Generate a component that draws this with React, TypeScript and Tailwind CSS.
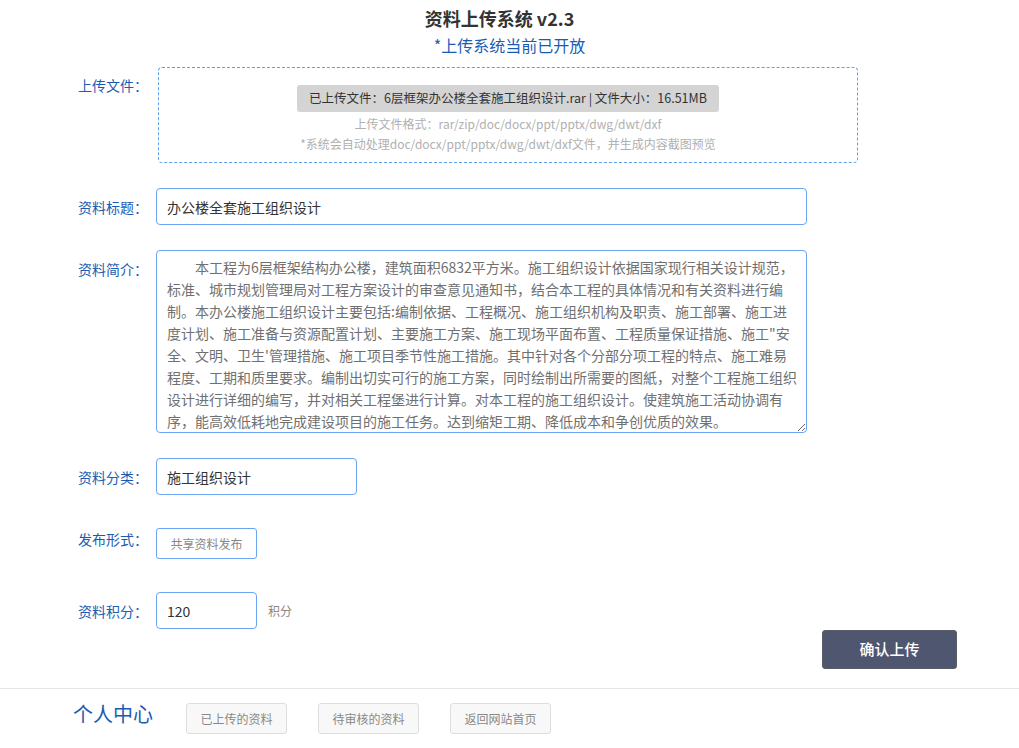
import React from "react";

const font = { fontFamily: '"Noto Sans CJK SC", "Noto Sans", sans-serif' };

const intro = [
  "　　本工程为6层框架结构办公楼，建筑面积6832平方米。施工组织设计依据国家现行相关设计规范，",
  "标准、城市规划管理局对工程方案设计的审查意见通知书，结合本工程的具体情况和有关资料进行编",
  "制。本办公楼施工组织设计主要包括:编制依据、工程概况、施工组织机构及职责、施工部署、施工进",
  "度计划、施工准备与资源配置计划、主要施工方案、施工现场平面布置、工程质量保证措施、施工\"安",
  "全、文明、卫生'管理措施、施工项目季节性施工措施。其中针对各个分部分项工程的特点、施工难易",
  "程度、工期和质里要求。编制出切实可行的施工方案，同时绘制出所需要的图紙，对整个工程施工组织",
  "设计进行详细的编写，并对相关工程堡进行计算。对本工程的施工组织设计。使建筑施工活动协调有",
  "序，能高效低耗地完成建设项目的施工任务。达到缩矩工期、降低成本和争创优质的效果。",
].join("\n");

function Label({ children, className = "" }: { children: React.ReactNode; className?: string }) {
  return (
    <div className={"w-[78px] shrink-0 text-[14px] leading-[20px] text-[#1b5cb3] " + className}>
      {children}
    </div>
  );
}

export default function App() {
  return (
    <div className="w-[1019px] min-h-[748px] bg-white" style={font}>
      <div className="pt-[6px] pr-[20px] text-center text-[18px] font-bold leading-[24px] text-[#333]">
        资料上传系统 v2.3
      </div>
      <div className="mt-[4px] text-center text-[16px] leading-[22px] text-[#1b5cb3]">
        *上传系统当前已开放
      </div>

      <div className="w-[957px] pl-[78px] flex flex-col">
        {/* upload file */}
        <div className="mt-[11px] flex items-start">
          <Label className="pt-[8px]">上传文件：</Label>
          <div className="ml-[2px] w-[700px] h-[96px] rounded-[4px] border border-dashed border-[#5b9ff0] flex flex-col items-center pt-[17px]">
            <div className="h-[27px] px-[12px] rounded-[3px] bg-[#d4d4d4] flex items-center text-[12.5px] text-[#333]">
              已上传文件：6层框架办公楼全套施工组织设计.rar | 文件大小：16.51MB
            </div>
            <div className="mt-[2px] text-[12px] leading-[20px] text-[#b0b0b0]">
              上传文件格式：rar/zip/doc/docx/ppt/pptx/dwg/dwt/dxf
            </div>
            <div className="text-[12px] leading-[20px] text-[#b0b0b0]">
              *系统会自动处理doc/docx/ppt/pptx/dwg/dwt/dxf文件，并生成内容截图预览
            </div>
          </div>
        </div>

        {/* title */}
        <div className="mt-[25px] flex items-center">
          <Label>资料标题：</Label>
          <input
            readOnly
            value="办公楼全套施工组织设计"
            className="w-[651px] h-[37px] rounded-[4px] border border-[#6aa4f2] px-[10px] text-[14px] text-[#333] outline-none"
            style={font}
          />
        </div>

        {/* intro */}
        <div className="mt-[25px] flex items-start">
          <Label className="pt-[9px]">资料简介：</Label>
          <textarea
            readOnly
            value={intro}
            className="w-[651px] h-[183px] rounded-[4px] border border-[#6aa4f2] pl-[10px] pr-[6px] pt-[5px] pb-0 text-[14px] leading-[22px] text-[#707070] outline-none overflow-hidden whitespace-pre"
            style={font}
          />
        </div>

        {/* category */}
        <div className="mt-[25px] flex items-center">
          <Label>资料分类：</Label>
          <input
            readOnly
            value="施工组织设计"
            className="w-[201px] h-[37px] rounded-[4px] border border-[#6aa4f2] px-[10px] text-[14px] text-[#333] outline-none"
            style={font}
          />
        </div>

        {/* publish type */}
        <div className="mt-[33px] flex items-start">
          <Label className="pt-[1px]">发布形式：</Label>
          <div className="w-[101px] h-[31px] rounded-[3px] border border-[#6aa4f2] flex items-center justify-center text-[12px] text-[#888]">
            共享资料发布
          </div>
        </div>

        {/* points */}
        <div className="mt-[33px] flex items-center">
          <Label>资料积分：</Label>
          <input
            readOnly
            value="120"
            className="w-[101px] h-[37px] rounded-[4px] border border-[#6aa4f2] px-[10px] text-[14px] text-[#333] outline-none"
            style={font}
          />
          <span className="ml-[11px] text-[12px] text-[#888]">积分</span>
        </div>

        <div className="mt-[1px] flex justify-end">
          <div className="w-[135px] h-[39px] rounded-[3px] bg-[#4f5670] border border-[#5a5d68] flex items-center justify-center text-[15px] font-medium text-white">
            确认上传
          </div>
        </div>
      </div>

      <div className="mt-[19px] border-t border-[#e3e5e8]" />

      <div className="flex items-start pl-[73px]">
        <div className="mt-[11px] text-[20px] leading-[28px] text-[#1b5cb3] font-normal">个人中心</div>
        <div className="ml-[33px] mt-[14px] flex gap-[31px]">
          {["已上传的资料", "待审核的资料", "返回网站首页"].map((t) => (
            <div
              key={t}
              className="w-[101px] h-[31px] rounded-[3px] border border-[#dedede] bg-[#f8f8f8] flex items-center justify-center text-[12px] text-[#888]"
            >
              {t}
            </div>
          ))}
        </div>
      </div>
    </div>
  );
}
